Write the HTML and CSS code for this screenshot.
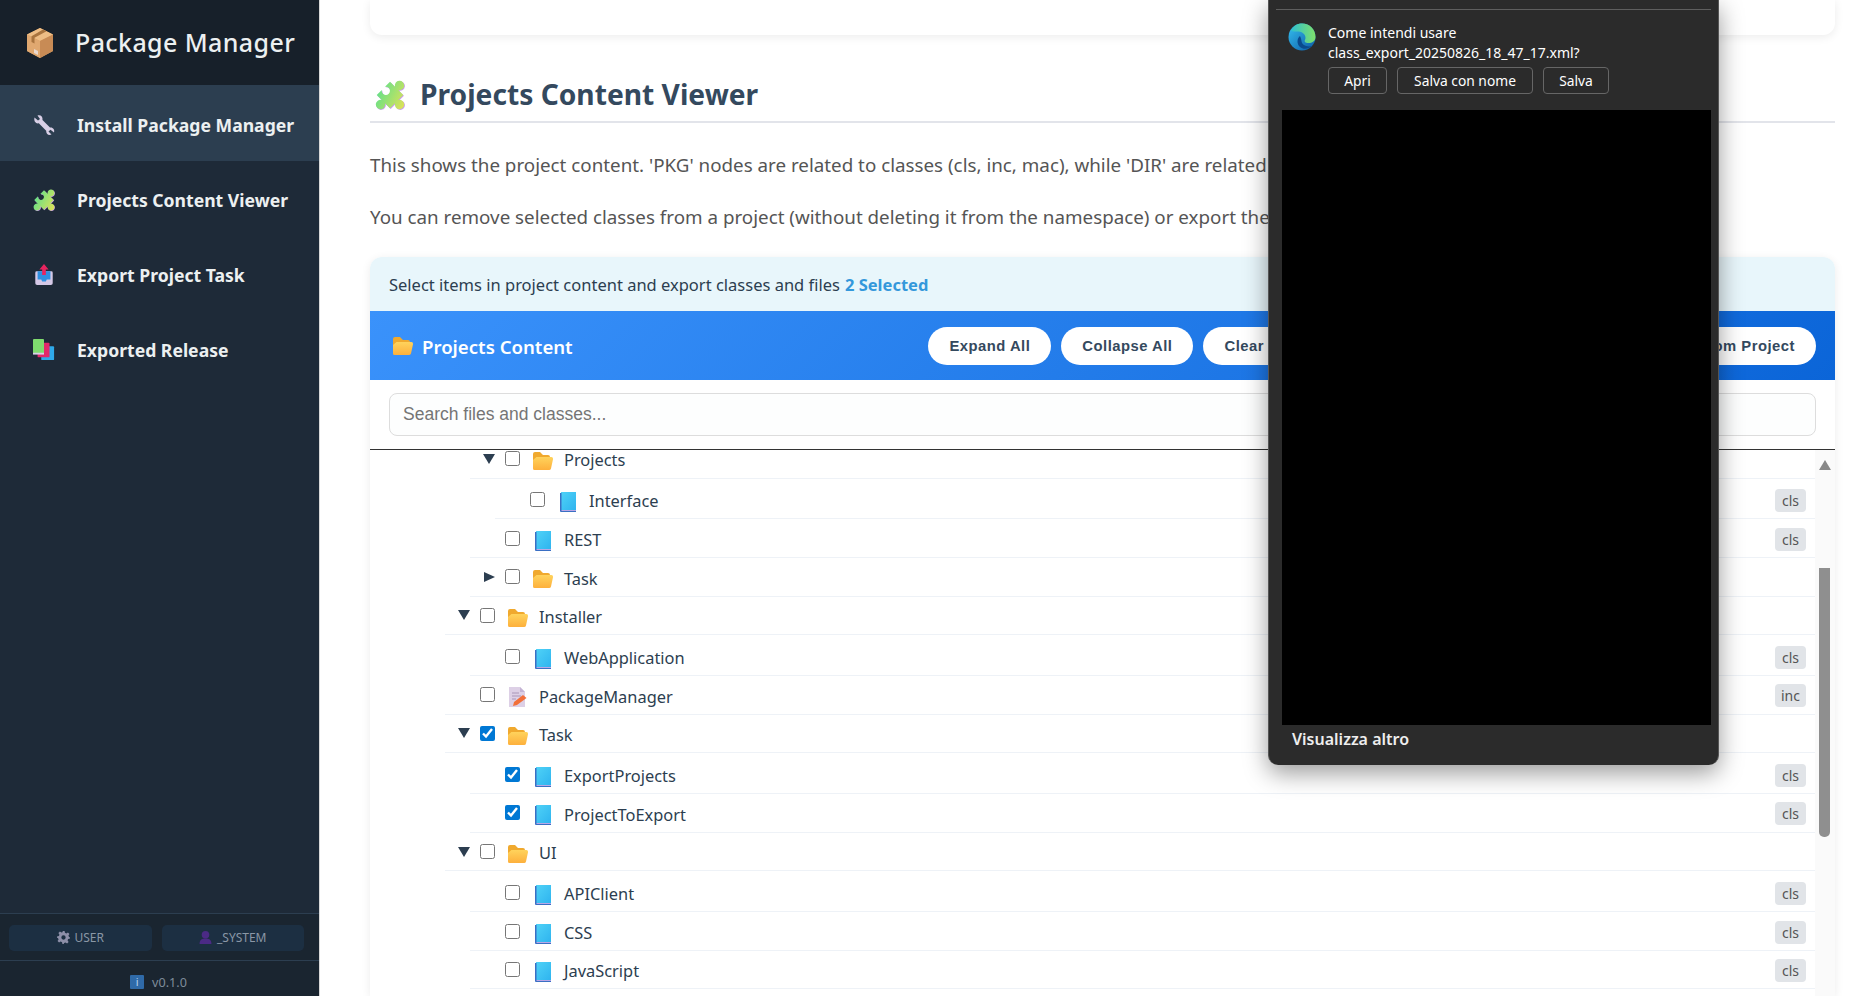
FILE: index.html
```html
<!DOCTYPE html>
<html lang="en">
<head>
    <meta charset="UTF-8">
    <title>Package Manager</title>
    <link rel="stylesheet" href="styles.css">
</head>

<body>
    <!-- icon sprites -->
    <svg class="sprites" width="0" height="0">
        <defs>
            <linearGradient id="g-puzzle" x1="0" y1="1" x2="1" y2="0.6">
                <stop offset="0" stop-color="#5fe08a"/><stop offset="1" stop-color="#d7e25a"/>
            </linearGradient>
            <linearGradient id="g-folder" x1="0" y1="0" x2="0" y2="1">
                <stop offset="0" stop-color="#ffd35c"/><stop offset="1" stop-color="#fdb03c"/>
            </linearGradient>
            <linearGradient id="g-book" x1="0" y1="0" x2="1" y2="1">
                <stop offset="0" stop-color="#4fd2f7"/><stop offset="1" stop-color="#2fb4ef"/>
            </linearGradient>
            <linearGradient id="g-edge" x1="0" y1="0" x2="1" y2="1">
                <stop offset="0" stop-color="#35c1f1"/><stop offset="1" stop-color="#0c59a4"/>
            </linearGradient>
            <linearGradient id="g-edge2" x1="0" y1="0" x2="1" y2="0">
                <stop offset="0" stop-color="#2fc0cf"/><stop offset="1" stop-color="#7fe06a"/>
            </linearGradient>
        </defs>
        <symbol id="i-box" viewBox="0 0 28 30">
            <path d="M14 0 27 6.500V23L14 30 1 23V6.500Z" fill="#d9a066"/>
            <path d="M14 0 27 6.500 14 13 1 6.500Z" fill="#eebd85"/>
            <path d="M14 13V30L1 23V6.500Z" fill="#e0a870"/>
            <path d="M14 13V30L27 23V6.500Z" fill="#c88b55"/>
            <path d="M17 1.500 20.500 3.300 8.500 9.700V15.500L5.500 14V8.200Z" fill="#a9743f"/>
            <path d="M8 21 12 23V27L8 25Z" fill="#ead9cf"/>
        </symbol>
        <symbol id="i-wrench" viewBox="0 0 22 22">
            <path d="M1.500 3.500 5 6.500 7 5 4.500 1.500C7.500.5 10 2.500 9.500 6L17 13.500C19.800 13 22 15.500 21 18.500L17.500 15.700 15.500 17.500 18.500 20.500C15.500 22 12.800 19.500 13.200 16.700L5.800 9.300C2.800 10 .5 7 1.500 3.500Z" fill="#d8cfe6"/>
        </symbol>
        <symbol id="i-puzzle" viewBox="4 4 16 16">
            <g transform="rotate(45 12 12)">
                <path transform="translate(.5 0)" d="M7 7H10.800A2.500 2.500 0 1 1 13.200 7H17V10.800A2.500 2.500 0 1 1 17 13.200V17H13.200A2.500 2.500 0 1 1 10.800 17H7V13.200A2.200 2.200 0 1 0 7 10.800Z" fill="#c89af0"/>
                <path d="M7 7H10.800A2.500 2.500 0 1 1 13.200 7H17V10.800A2.500 2.500 0 1 1 17 13.200V17H13.200A2.500 2.500 0 1 1 10.800 17H7V13.200A2.200 2.200 0 1 0 7 10.800Z" fill="url(#g-puzzle)"/>
            </g>
        </symbol>
        <symbol id="i-outbox" viewBox="0 0 20 24">
            <path d="M2 8H18A1.500 1.500 0 0 1 19.500 9.500V21A2 2 0 0 1 17.500 23H2.500A2 2 0 0 1 .5 21V9.500A1.500 1.500 0 0 1 2 8Z" fill="#d5c8e6"/>
            <path d="M3 8H17V17H13L12 19H8L7 17H3Z" fill="#2e8fe0"/>
            <path d="M10 0 15 6H12V12H8V6H5Z" fill="#e8245f"/>
        </symbol>
        <symbol id="i-books" viewBox="0 0 24 24">
            <rect x="9" y="8" width="14" height="15" rx="1" fill="#2fa9ea"/>
            <rect x="5" y="4" width="13" height="16" rx="1" fill="#e2296a"/>
            <rect x="0" y="0" width="12" height="16" rx="1" fill="#7fdc6e"/>
            <rect x="0" y="15" width="12" height="2" fill="#d8cfe6"/>
        </symbol>
        <symbol id="i-folder" viewBox="0 0 20 18">
            <path d="M0 2A2 2 0 0 1 2 0H7L10 3H15A2 2 0 0 1 17 5V14H0Z" fill="#f0a92e"/>
            <path d="M3.500 5H18A2 2 0 0 1 20 7.200L18 16.500A2 2 0 0 1 16 18H1.500A1.500 1.500 0 0 1 0 16.500V8Z" fill="url(#g-folder)"/>
        </symbol>
        <symbol id="i-book" viewBox="0 0 16 20">
            <rect x="1" y="0" width="15" height="18" fill="url(#g-book)"/>
            <path d="M0 1H1.500V18H16V20H1A1 1 0 0 1 0 19Z" fill="#3a6fc4"/>
            <rect x="1.500" y="18" width="14.500" height="1" fill="#b9a7e6"/>
        </symbol>
        <symbol id="i-memo" viewBox="0 0 18 20">
            <path d="M0 0H11L16 5V20H0Z" fill="#ddd0e6"/>
            <path d="M11 0 16 5H11Z" fill="#c4b4d4"/>
            <path d="M3 6H10M3 9H12M3 12H7" stroke="#a996b8" stroke-width="1"/>
            <path d="M4 19 5 15 14 8 17.500 11 8 18Z" fill="#f2703a"/>
        </symbol>
        <symbol id="i-gear" viewBox="0 0 24 24">
            <path fill-rule="evenodd" d="M10 0H14L14.700 3.400 17.300 4.500 20.200 2.600 23 5.400 21.100 8.300 22.200 10.900 24 12 24 14 20.600 14.700 19.500 17.300 21.400 20.200 18.600 23 15.700 21.100 13.100 22.200 12.400 24H10L9.300 20.600 6.700 19.500 3.800 21.400 1 18.600 2.900 15.700 1.800 13.100 0 12.400V10L3.400 9.300 4.500 6.700 2.600 3.800 5.400 1 8.300 2.900 10.900 1.800ZM12 8A4 4 0 1 0 12 16 4 4 0 0 0 12 8Z" fill="#8d8fa8"/>
        </symbol>
        <symbol id="i-user" viewBox="0 0 24 24">
            <circle cx="12" cy="7" r="7" fill="#4b2a85"/>
            <path d="M1 24C1 16 6 14 12 14S23 16 23 24Z" fill="#4b2a85"/>
        </symbol>
        <symbol id="i-edge" viewBox="0 0 28 28">
            <circle cx="14" cy="14" r="13.500" fill="url(#g-edge)"/>
            <path d="M3 8C5 3 9 .5 14 .5 22 .5 27.500 6.500 27.500 14 27.500 18 24 20 20.500 20 17 20 16 18.500 17 17 19 13 15 8.500 10.500 8.500 7 8.500 5 8.500 3 8Z" fill="url(#g-edge2)"/>
            <path d="M12 13C9 15 8.500 21 12 24 15 26.500 20 26.500 24 23 19 24.500 14 22 13.500 18 13.300 16.500 13 15 12 13Z" fill="#0a4a8c"/>
        </symbol>
    </svg>

    <aside class="sidebar">
        <div class="sidebar-header">
            <svg class="brand-icon"><use href="#i-box"/></svg>
            <span class="brand-name">Package Manager</span>
        </div>
        <nav class="nav">
            <a class="nav-item active"><svg class="nav-icon"><use href="#i-wrench"/></svg>Install Package Manager</a>
            <a class="nav-item"><svg class="nav-icon"><use href="#i-puzzle"/></svg>Projects Content Viewer</a>
            <a class="nav-item"><svg class="nav-icon"><use href="#i-outbox"/></svg>Export Project Task</a>
            <a class="nav-item"><svg class="nav-icon"><use href="#i-books"/></svg>Exported Release</a>
        </nav>
        <div class="sidebar-footer">
            <div class="user-row">
                <span class="user-chip"><svg class="chip-icon"><use href="#i-gear"/></svg>USER</span>
                <span class="user-chip"><svg class="chip-icon"><use href="#i-user"/></svg>_SYSTEM</span>
            </div>
            <div class="version"><span class="info-icon">i</span>v0.1.0</div>
        </div>
    </aside>

    <main class="main">
        <div class="prev-card"></div>

        <h2 class="page-title"><svg class="title-icon"><use href="#i-puzzle"/></svg>Projects Content Viewer</h2>
        <p class="intro">This shows the project content. 'PKG' nodes are related to classes (cls, inc, mac), while 'DIR' are related to CSP.</p>
        <p class="intro">You can remove selected classes from a project (without deleting it from the namespace) or export them.</p>

        <section class="panel">
            <div class="panel-info">Select items in project content and export classes and files <strong>2 Selected</strong></div>
            <div class="panel-bar">
                <span class="panel-title"><svg class="panel-icon"><use href="#i-folder"/></svg>Projects Content</span>
                <div class="panel-actions">
                    <button class="pill">Expand All</button>
                    <button class="pill">Collapse All</button>
                    <button class="pill">Clear Selection</button>
                    <button class="pill">Export Selected Elements</button>
                    <button class="pill">Remove from Project</button>
                </div>
            </div>
            <div class="search-box">
                <input class="search" type="text" placeholder="Search files and classes...">
            </div>

            <div class="tree-wrap">
                <div class="tree-scroll">
                    <ul class="tree">
                        <li>
                            <ul class="children">
                                <li>
                                    <div class="row"><span class="toggle"><i class="arrow-down"></i></span><input type="checkbox"><svg class="icon"><use href="#i-folder"/></svg><span class="name">Projects</span></div>
                                    <ul class="children">
                                        <li><div class="row"><span class="toggle"></span><input type="checkbox"><svg class="icon"><use href="#i-book"/></svg><span class="name">Interface</span><span class="badge">cls</span></div></li>
                                    </ul>
                                </li>
                                <li><div class="row"><span class="toggle"></span><input type="checkbox"><svg class="icon"><use href="#i-book"/></svg><span class="name">REST</span><span class="badge">cls</span></div></li>
                                <li><div class="row"><span class="toggle"><i class="arrow-right"></i></span><input type="checkbox"><svg class="icon"><use href="#i-folder"/></svg><span class="name">Task</span></div></li>
                            </ul>
                        </li>
                        <li>
                            <div class="row"><span class="toggle"><i class="arrow-down"></i></span><input type="checkbox"><svg class="icon"><use href="#i-folder"/></svg><span class="name">Installer</span></div>
                            <ul class="children">
                                <li><div class="row"><span class="toggle"></span><input type="checkbox"><svg class="icon"><use href="#i-book"/></svg><span class="name">WebApplication</span><span class="badge">cls</span></div></li>
                            </ul>
                        </li>
                        <li><div class="row"><span class="toggle"></span><input type="checkbox"><svg class="icon"><use href="#i-memo"/></svg><span class="name">PackageManager</span><span class="badge">inc</span></div></li>
                        <li>
                            <div class="row"><span class="toggle"><i class="arrow-down"></i></span><input type="checkbox" checked><svg class="icon"><use href="#i-folder"/></svg><span class="name">Task</span></div>
                            <ul class="children">
                                <li><div class="row"><span class="toggle"></span><input type="checkbox" checked><svg class="icon"><use href="#i-book"/></svg><span class="name">ExportProjects</span><span class="badge">cls</span></div></li>
                                <li><div class="row"><span class="toggle"></span><input type="checkbox" checked><svg class="icon"><use href="#i-book"/></svg><span class="name">ProjectToExport</span><span class="badge">cls</span></div></li>
                            </ul>
                        </li>
                        <li>
                            <div class="row"><span class="toggle"><i class="arrow-down"></i></span><input type="checkbox"><svg class="icon"><use href="#i-folder"/></svg><span class="name">UI</span></div>
                            <ul class="children">
                                <li><div class="row"><span class="toggle"></span><input type="checkbox"><svg class="icon"><use href="#i-book"/></svg><span class="name">APIClient</span><span class="badge">cls</span></div></li>
                                <li><div class="row"><span class="toggle"></span><input type="checkbox"><svg class="icon"><use href="#i-book"/></svg><span class="name">CSS</span><span class="badge">cls</span></div></li>
                                <li><div class="row"><span class="toggle"></span><input type="checkbox"><svg class="icon"><use href="#i-book"/></svg><span class="name">JavaScript</span><span class="badge">cls</span></div></li>
                            </ul>
                        </li>
                    </ul>
                </div>
                <div class="scrollbar">
                    <i class="scroll-up"></i>
                    <div class="scroll-thumb"></div>
                </div>
            </div>
        </section>
    </main>

    <!-- browser download popup, lies over the page -->
    <div class="download-popup">
        <div class="popup-line"></div>
        <div class="popup-head">
            <svg class="edge-logo"><use href="#i-edge"/></svg>
            <div class="popup-body">
                <div class="popup-text">Come intendi usare<br>class_export_20250826_18_47_17.xml?</div>
                <div class="popup-buttons">
                    <button class="popup-btn btn-open">Apri</button>
                    <button class="popup-btn btn-saveas">Salva con nome</button>
                    <button class="popup-btn btn-save">Salva</button>
                </div>
            </div>
        </div>
        <div class="popup-black"></div>
        <div class="popup-more">Visualizza altro</div>
    </div>
</body>
</html>
```

FILE: styles.css
```css
/* page */
* {
    margin: 0;
    padding: 0;
    box-sizing: border-box;
}
html, body {
    height: 100%;
}
body {
    display: flex;
    height: 996px;
    overflow: hidden;
    position: relative;
    background: #fff;
    color: #2c3e50;
    font-family: "Noto Sans", "Open Sans", sans-serif;
}
.sprites {
    position: absolute;
}
ul {
    list-style: none;
}

/* sidebar */
.sidebar {
    width: 320px;
    flex-shrink: 0;
    display: flex;
    flex-direction: column;
    background: #1e2a38;
    border-right: 1px solid #d8d8d8;
}
.sidebar-header {
    height: 85px;
    display: flex;
    align-items: center;
    padding-left: 26px;
    background: #17202a;
}
.brand-icon {
    width: 28px;
    height: 30px;
    margin-right: 21px;
}
.brand-name {
    color: #ecf0f1;
    font-size: 25px;
    font-weight: 500;
    letter-spacing: 0.4px;
    margin-top: -2px;
}
.nav {
    flex: 1;
}
.nav-item {
    height: 75px;
    display: flex;
    align-items: center;
    padding: 2px 0 0 33px;
    color: #ecf0f1;
    font-size: 17.6px;
    font-weight: 700;
}
.nav-item.active {
    height: 76px;
    padding-top: 3px;
    background: #2c3e50;
}
.nav-icon {
    width: 22px;
    height: 22px;
    margin-right: 22px;
}
.sidebar-footer {
    background: #1a2530;
    border-top: 1px solid #2c3e50;
}
.user-row {
    height: 47px;
    display: flex;
    align-items: center;
    gap: 10px;
    padding: 1px 15px 0 9px;
    border-bottom: 1px solid #2c3e50;
}
.user-chip {
    flex: 1;
    height: 26px;
    display: flex;
    align-items: center;
    justify-content: center;
    background: #1c2f42;
    border-radius: 5px;
    color: #8a97a6;
    font-size: 12px;
}
.chip-icon {
    width: 13px;
    height: 13px;
    margin-right: 5px;
}
.version {
    height: 35px;
    display: flex;
    align-items: center;
    justify-content: center;
    padding: 7px 2px 0 0;
    color: #7f8c9a;
    font-size: 12.6px;
}
.info-icon {
    width: 14px;
    height: 14px;
    margin-right: 8px;
    background: #2f6aa8;
    border-radius: 1px;
    color: #b9d4ee;
    font-size: 11px;
    line-height: 14px;
    text-align: center;
}

/* main content */
.main {
    flex: 1;
    min-width: 0;
    padding: 0 38px 0 50px;
}
.prev-card {
    height: 35px;
    background: #fff;
    border-radius: 0 0 12px 12px;
    box-shadow: 0 2px 10px rgba(0, 0, 0, 0.08);
}
.page-title {
    height: 88px;
    display: flex;
    align-items: flex-end;
    padding-bottom: 8px;
    border-bottom: 2px solid #e2e4ea;
    color: #34495e;
    font-size: 28.2px;
    font-weight: 700;
    line-height: 38px;
}
.title-icon {
    width: 30px;
    height: 30px;
    margin: 0 15px 3px 5px;
}
.intro {
    margin-top: 30px;
    color: #555;
    font-size: 18.8px;
    line-height: 25px;
    white-space: nowrap;
}
.intro + .intro {
    margin-top: 27px;
}

/* panel */
.panel {
    margin-top: 27px;
    border-radius: 12px 12px 0 0;
    box-shadow: 0 2px 10px rgba(0, 0, 0, 0.08);
    background: #fff;
}
.panel-info {
    height: 54px;
    display: flex;
    align-items: center;
    gap: 5px;
    padding-left: 19px;
    background: #e8f6fb;
    border-radius: 12px 12px 0 0;
    color: #2c3e50;
    font-size: 16.5px;
}
.panel-info strong {
    color: #3498db;
    font-weight: 700;
}
.panel-bar {
    height: 69px;
    display: flex;
    align-items: center;
    justify-content: space-between;
    padding: 0 19px 0 23px;
    background: linear-gradient(135deg, #3a92fb, #0b65d8);
}
.panel-title {
    display: flex;
    align-items: center;
    padding-top: 1px;
    color: #fff;
    font-size: 18.6px;
    font-weight: 600;
}
.panel-icon {
    width: 20px;
    height: 18px;
    margin-right: 9px;
}
.panel-actions {
    display: flex;
    gap: 10px;
}
.pill {
    height: 38px;
    padding: 0 21px;
    border: none;
    border-radius: 20px;
    background: #fff;
    color: #34495e;
    font-family: "Liberation Sans", Arial, sans-serif;
    font-size: 14.8px;
    font-weight: 700;
    letter-spacing: 0.5px;
}
.search-box {
    height: 70px;
    padding: 13px 19px 13px 19px;
    border-bottom: 1px solid #333;
}
.search {
    display: block;
    width: 100%;
    height: 43px;
    padding: 0 13px;
    border: 1px solid #ddd;
    border-radius: 8px;
    background: #fdfefe;
    font-family: "Liberation Sans", Arial, sans-serif;
    font-size: 17.5px;
}
.search::placeholder {
    color: #757575;
}

/* tree */
.tree-wrap {
    display: flex;
    height: 546px;
    overflow: hidden;
}
.tree-scroll {
    flex: 1;
    min-width: 0;
    padding-left: 75px;
    overflow: hidden;
}
.tree {
    margin-top: -12.4px;
}
.children {
    margin-left: 25px;
    padding-top: 2.3px;
}
.row {
    height: 38.6px;
    display: flex;
    align-items: center;
    padding-right: 9px;
    border-bottom: 1px solid #eef2f7;
}
.toggle {
    width: 35px;
    flex-shrink: 0;
    display: flex;
    justify-content: center;
    padding-left: 3px;
}
.arrow-down {
    border-left: 6px solid transparent;
    border-right: 6px solid transparent;
    border-top: 10px solid #2c3e50;
}
.arrow-right {
    border-top: 5.5px solid transparent;
    border-bottom: 5.5px solid transparent;
    border-left: 11px solid #2c3e50;
}
.row input {
    width: 15px;
    height: 15px;
    flex-shrink: 0;
    accent-color: #0078d4;
}
.icon {
    width: 20px;
    height: 20px;
    flex-shrink: 0;
    margin: 5px 11px 0 13px;
}
.name {
    flex: 1;
    padding-top: 2.5px;
    color: #2c3e50;
    font-size: 16.4px;
}
.badge {
    width: 31px;
    height: 23px;
    margin-top: 2px;
    background: #e1e4e8;
    border-radius: 4px;
    color: #555;
    font-size: 14px;
    line-height: 23px;
    text-align: center;
}
.scrollbar {
    width: 20px;
    flex-shrink: 0;
    background: #fafafa;
    padding-top: 10px;
}
.scroll-up {
    display: block;
    width: 0;
    margin: 0 auto;
    border-left: 6.5px solid transparent;
    border-right: 6.5px solid transparent;
    border-bottom: 10px solid #888;
}
.scroll-thumb {
    width: 11px;
    height: 269px;
    margin: 98px 0 0 4px;
    background: #8f8f8f;
    border-radius: 0 0 5px 5px;
}

/* download popup */
.download-popup {
    position: absolute;
    top: 0;
    left: 1268px;
    width: 451px;
    height: 765px;
    padding-top: 9px;
    background: #2b2b2b;
    border-left: 1px solid #555;
    border-right: 1px solid #555;
    border-radius: 0 0 10px 10px;
    box-shadow: 0 8px 24px rgba(0, 0, 0, 0.4);
    color: #fff;
    font-family: "Noto Sans", sans-serif;
}
.popup-line {
    height: 1px;
    margin: 0 7px;
    background: #5e5e5e;
}
.popup-head {
    display: flex;
    padding: 13px 0 0 19px;
}
.edge-logo {
    width: 28px;
    height: 28px;
    margin-right: 12px;
}
.popup-text {
    font-size: 14px;
    line-height: 20px;
}
.popup-buttons {
    display: flex;
    gap: 10px;
    margin-top: 4px;
}
.popup-btn {
    height: 27px;
    background: #2b2b2b;
    border: 1px solid #666;
    border-radius: 4px;
    color: #fff;
    font-family: "Noto Sans", sans-serif;
    font-size: 13.8px;
}
.btn-open {
    width: 59px;
}
.btn-saveas {
    width: 136px;
}
.btn-save {
    width: 66px;
}
.popup-black {
    height: 615px;
    margin: 16px 7px 0 13px;
    background: #000;
}
.popup-more {
    margin: 3px 0 0 23px;
    color: #eee;
    font-size: 16px;
    font-weight: 600;
}
```
